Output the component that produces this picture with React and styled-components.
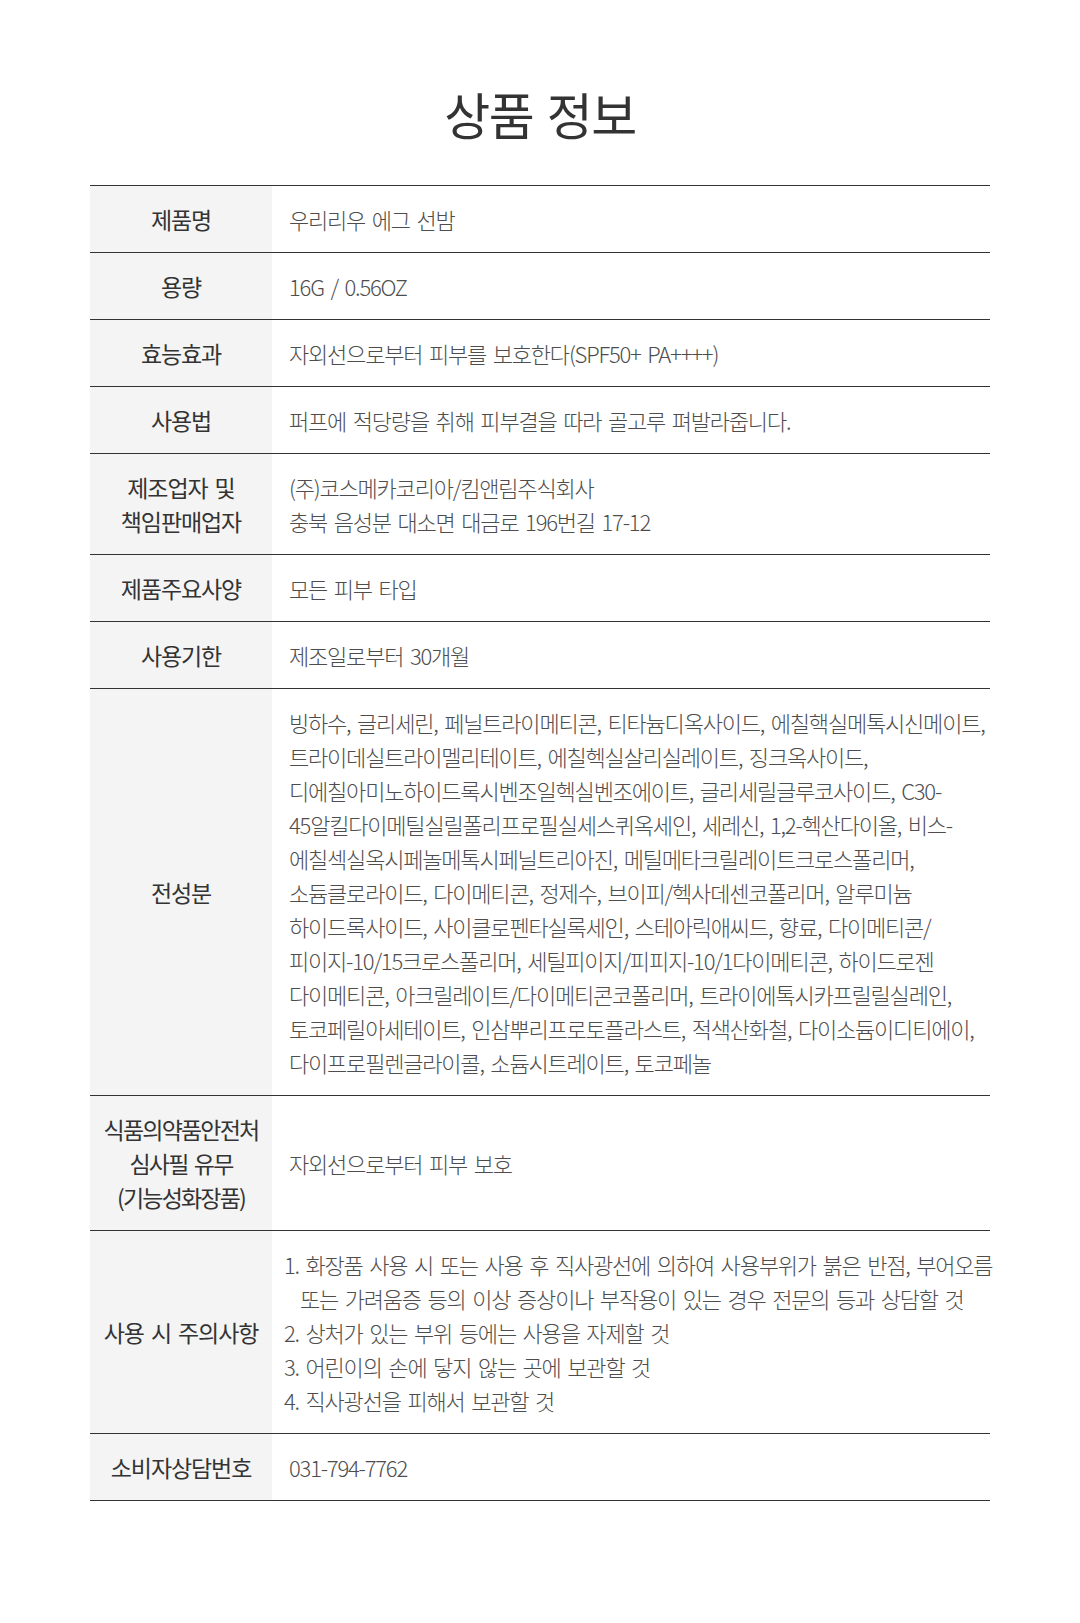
import React from 'react';
import styled, { createGlobalStyle } from 'styled-components';

const GlobalStyle = createGlobalStyle`
  body {
    margin: 0;
    background: #fff;
    font-family: "Noto Sans CJK KR", "Noto Sans", sans-serif;
  }
`;

const Page = styled.div`
  width: 1080px;
  min-height: 1623px;
  padding-top: 83px;
  box-sizing: border-box;
`;

const Title = styled.h1`
  margin: 0 0 42px;
  text-align: center;
  font-size: 50px;
  line-height: 60px;
  font-weight: 400;
  letter-spacing: -1.5px;
  word-spacing: 4px;
  color: #333;
`;

const Table = styled.div`
  width: 900px;
  margin: 0 auto;
  border-top: 1px solid #333;
`;

const Row = styled.div`
  display: grid;
  grid-template-columns: 182px 1fr;
  border-bottom: 1px solid #333;
`;

const Label = styled.div`
  background: #f4f4f4;
  display: flex;
  align-items: center;
  justify-content: center;
  text-align: center;
  padding: 16px 4px;
  font-size: 23px;
  line-height: 34px;
  font-weight: 400;
  letter-spacing: ${p => (p.$tight ? '-1.8px' : '-1.1px')};
  word-spacing: 3px;
  color: #333;
`;

const Value = styled.div`
  display: flex;
  flex-direction: column;
  justify-content: center;
  padding: 16px 10px 16px ${p => (p.$list ? '12px' : '17px')};
  font-size: 22px;
  line-height: 34px;
  font-weight: 300;
  letter-spacing: -1.2px;
  word-spacing: 3px;
  color: #4d4d4d;
`;

const Line = styled.span`
  display: block;
  white-space: nowrap;
  padding-left: ${p => (p.$indent ? '16px' : '0')};
`;

const ingredients = [
  '빙하수, 글리세린, 페닐트라이메티콘, 티타늄디옥사이드, 에칠핵실메톡시신메이트,',
  '트라이데실트라이멜리테이트, 에칠헥실살리실레이트, 징크옥사이드,',
  '디에칠아미노하이드록시벤조일헥실벤조에이트, 글리세릴글루코사이드, C30-',
  '45알킬다이메틸실릴폴리프로필실세스퀴옥세인, 세레신, 1,2-헥산다이올, 비스-',
  '에칠섹실옥시페놀메톡시페닐트리아진, 메틸메타크릴레이트크로스폴리머,',
  '소듐클로라이드, 다이메티콘, 정제수, 브이피/헥사데센코폴리머, 알루미늄',
  '하이드록사이드, 사이클로펜타실록세인, 스테아릭애씨드, 향료, 다이메티콘/',
  '피이지-10/15크로스폴리머, 세틸피이지/피피지-10/1다이메티콘, 하이드로젠',
  '다이메티콘, 아크릴레이트/다이메티콘코폴리머, 트라이에톡시카프릴릴실레인,',
  '토코페릴아세테이트, 인삼뿌리프로토플라스트, 적색산화철, 다이소듐이디티에이,',
  '다이프로필렌글라이콜, 소듐시트레이트, 토코페놀',
];

const cautions = [
  '1. 화장품 사용 시 또는 사용 후 직사광선에 의하여 사용부위가 붉은 반점, 부어오름',
  { text: '또는 가려움증 등의 이상 증상이나 부작용이 있는 경우 전문의 등과 상담할 것', indent: true },
  '2. 상처가 있는 부위 등에는 사용을 자제할 것',
  '3. 어린이의 손에 닿지 않는 곳에 보관할 것',
  '4. 직사광선을 피해서 보관할 것',
];

const rows = [
  { label: ['제품명'], value: ['우리리우 에그 선밤'] },
  { label: ['용량'], value: ['16G / 0.56OZ'] },
  { label: ['효능효과'], value: ['자외선으로부터 피부를 보호한다(SPF50+ PA++++)'] },
  { label: ['사용법'], value: ['퍼프에 적당량을 취해 피부결을 따라 골고루 펴발라줍니다.'] },
  {
    label: ['제조업자 및', '책임판매업자'],
    value: ['(주)코스메카코리아/킴앤림주식회사', '충북 음성분 대소면 대금로 196번길 17-12'],
  },
  { label: ['제품주요사양'], value: ['모든 피부 타입'] },
  { label: ['사용기한'], value: ['제조일로부터 30개월'] },
  { label: ['전성분'], value: ingredients },
  {
    label: ['식품의약품안전처', '심사필 유무', '(기능성화장품)'],
    value: ['자외선으로부터 피부 보호'],
    tight: true,
  },
  { label: ['사용 시 주의사항'], value: cautions, list: true },
  { label: ['소비자상담번호'], value: ['031-794-7762'] },
];

const App = () => (
  <Page>
    <GlobalStyle />
    <Title>상품 정보</Title>
    <Table>
      {rows.map(row => (
        <Row key={row.label[0]}>
          <Label $tight={row.tight}>
            <div>
              {row.label.map(l => (
                <Line key={l}>{l}</Line>
              ))}
            </div>
          </Label>
          <Value $list={row.list}>
            {row.value.map(v =>
              typeof v === 'string' ? (
                <Line key={v}>{v}</Line>
              ) : (
                <Line key={v.text} $indent={v.indent}>{v.text}</Line>
              )
            )}
          </Value>
        </Row>
      ))}
    </Table>
  </Page>
);

export default App;
